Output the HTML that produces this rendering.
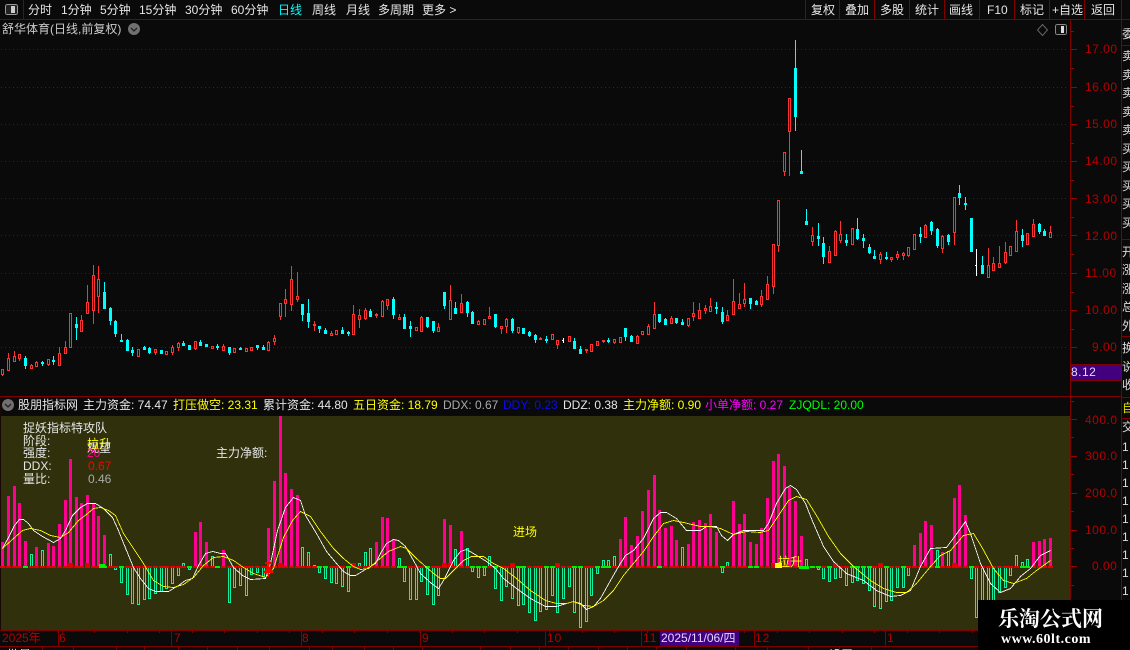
<!DOCTYPE html>
<html><head><meta charset="utf-8"><style>
html,body{margin:0;padding:0;background:#0a0a0a;width:1130px;height:650px;overflow:hidden}
#w{position:absolute;left:0;top:0;width:1130px;height:650px;overflow:hidden;background:#0a0a0a;contain:paint}
#s{position:absolute;left:0;top:0;display:block}
.t{position:absolute;white-space:nowrap;font:12px/14px "Liberation Sans","WenQuanYi Zen Hei","Noto Sans CJK SC",sans-serif;color:#e6e6e6}
.a{color:#b40000;letter-spacing:.5px;left:1085px}
.m{color:#b40000;top:631px}
.c{position:absolute;left:1122px;width:8px;height:650px;top:0;overflow:hidden}
.c .t{left:0;color:#ddd}
.b{position:absolute;left:0;top:647px;width:978px;height:3px;overflow:hidden}
.b .t{top:1px}
</style></head><body><div id="w">
<svg id="s" width="1130" height="650" shape-rendering="crispEdges"></svg>
<div class="t" style="left:28px;top:3px">分时</div>
<div class="t" style="left:61px;top:3px">1分钟</div>
<div class="t" style="left:100px;top:3px">5分钟</div>
<div class="t" style="left:139px;top:3px">15分钟</div>
<div class="t" style="left:185px;top:3px">30分钟</div>
<div class="t" style="left:231px;top:3px">60分钟</div>
<div class="t" style="left:278px;top:3px;color:#0ff">日线</div>
<div class="t" style="left:312px;top:3px">周线</div>
<div class="t" style="left:346px;top:3px">月线</div>
<div class="t" style="left:378px;top:3px">多周期</div>
<div class="t" style="left:422px;top:3px">更多 &gt;</div>
<div class="t" style="left:811px;top:3px">复权</div>
<div class="t" style="left:845px;top:3px">叠加</div>
<div class="t" style="left:880px;top:3px">多股</div>
<div class="t" style="left:915px;top:3px">统计</div>
<div class="t" style="left:949px;top:3px">画线</div>
<div class="t" style="left:987px;top:3px">F10</div>
<div class="t" style="left:1020px;top:3px">标记</div>
<div class="t" style="left:1052px;top:3px">+自选</div>
<div class="t" style="left:1091px;top:3px">返回</div>
<div class="t" style="left:2px;top:22px;color:#ccc">舒华体育(日线,前复权)</div>

<div class="t a" style="top:42px">17.00</div>
<div class="t a" style="top:80px">16.00</div>
<div class="t a" style="top:117px">15.00</div>
<div class="t a" style="top:154px">14.00</div>
<div class="t a" style="top:192px">13.00</div>
<div class="t a" style="top:229px">12.00</div>
<div class="t a" style="top:266px">11.00</div>
<div class="t a" style="top:303px">10.00</div>
<div class="t a" style="top:340px;left:1092px">9.00</div>
<div class="t" style="left:1071px;top:365px;color:#e0d8ff;letter-spacing:.5px">8.12</div>
<div class="t a" style="top:413px;left:1085px">400.0</div>
<div class="t a" style="top:449px">300.0</div>
<div class="t a" style="top:486px">200.0</div>
<div class="t a" style="top:523px">100.0</div>
<div class="t a" style="top:559px;left:1092px">0.00</div>

<div class="t" style="left:18px;top:398px">股朋指标网</div>
<div class="t" style="left:83px;top:398px">主力资金: 74.47</div>
<div class="t" style="left:173px;top:398px;color:#ff0">打压做空: 23.31</div>
<div class="t" style="left:263px;top:398px">累计资金: 44.80</div>
<div class="t" style="left:353px;top:398px;color:#ff0">五日资金: 18.79</div>
<div class="t" style="left:443px;top:398px;color:#aaa">DDX: 0.67</div>
<div class="t" style="left:503px;top:398px;color:#0a0ae6">DDY: 0.23</div>
<div class="t" style="left:563px;top:398px">DDZ: 0.38</div>
<div class="t" style="left:623px;top:398px;color:#ff0">主力净额: 0.90</div>
<div class="t" style="left:705px;top:398px;color:#f0f">小单净额: 0.27</div>
<div class="t" style="left:789px;top:398px;color:#0f0">ZJQDL: 20.00</div>

<div class="t" style="left:23px;top:421px">捉妖指标特攻队</div>
<div class="t" style="left:23px;top:434px">阶段:</div>
<div class="t" style="left:23px;top:446px">强度:</div>
<div class="t" style="left:23px;top:459px">DDX:</div>
<div class="t" style="left:23px;top:472px">量比:</div>
<div class="t" style="left:87px;top:437px;color:#ff0">拉升</div>
<div class="t" style="left:87px;top:441px">观望</div>
<div class="t" style="left:87px;top:446px;color:#ff0090">20</div>
<div class="t" style="left:88px;top:459px;color:#f00">0.67</div>
<div class="t" style="left:88px;top:472px;color:#aaa">0.46</div>
<div class="t" style="left:216px;top:446px">主力净额:</div>
<div class="t" style="left:513px;top:525px;color:#ff0">进场</div>
<div class="t" style="left:778px;top:555px;color:#ff0">拉升</div>

<div class="t m" style="left:2px">2025年</div>
<div class="t m" style="left:59px">6</div>
<div class="t m" style="left:174px">7</div>
<div class="t m" style="left:302px">8</div>
<div class="t m" style="left:422px">9</div>
<div class="t m" style="left:547px;letter-spacing:1px">10</div>
<div class="t m" style="left:643px;letter-spacing:1px">11</div>
<div class="t" style="left:661px;top:631px;color:#e0d8ff">2025/11/06/四</div>
<div class="t m" style="left:755px;letter-spacing:1px">12</div>
<div class="t m" style="left:887px">1</div>
<div class="b"><div class="t" style="left:7px">批量</div><div class="t" style="left:829px">设置</div></div>

<div class="c">
<div class="t" style="top:27px">委</div><div class="t" style="top:49px">卖</div><div class="t" style="top:68px">卖</div><div class="t" style="top:86px">卖</div><div class="t" style="top:105px">卖</div><div class="t" style="top:123px">卖</div><div class="t" style="top:142px">买</div><div class="t" style="top:160px">买</div><div class="t" style="top:179px">买</div><div class="t" style="top:197px">买</div><div class="t" style="top:216px">买</div>
<div class="t" style="top:245px">开</div><div class="t" style="top:263px">涨</div><div class="t" style="top:282px">涨</div><div class="t" style="top:300px">总</div><div class="t" style="top:319px">外</div>
<div class="t" style="top:341px">换</div><div class="t" style="top:360px">说</div><div class="t" style="top:378px">收</div>
<div class="t" style="top:401px;color:#e0e000">自</div><div class="t" style="top:420px">交</div>
<div class="t" style="top:440px">1</div><div class="t" style="top:458px">1</div><div class="t" style="top:476px">1</div><div class="t" style="top:494px">1</div><div class="t" style="top:512px">1</div><div class="t" style="top:530px">1</div><div class="t" style="top:548px">1</div><div class="t" style="top:566px">1</div><div class="t" style="top:584px">1</div>
</div>

<div style="position:absolute;left:978px;top:600px;width:152px;height:50px;background:#000"></div>
<div class="t" style="left:998px;top:606px;font:bold 21px/26px 'Liberation Serif','Noto Serif CJK SC',serif;color:#fff">乐淘公式网</div>
<div class="t" style="left:1001px;top:632px;font:bold 14px/16px 'Liberation Serif',serif;color:#fff;letter-spacing:.5px">www.60lt.com</div>
</div>
<script>
var o='';
function R(x,y,w,h,c){o+='<rect x="'+x+'" y="'+y+'" width="'+w+'" height="'+h+'" fill="'+c+'"/>'}
var DR='#800000',BG='#0a0a0a',RED='#ff3232',CY='#00ffff';
function X(i){return Math.floor(2.7+5.664*i)}
/* panels */
R(1,416,1070,214,'#30300c');
R(0,19,1130,1,DR);R(0,396,1121,1,DR);R(0,630,1121,1,DR);R(0,646,1121,1,DR);R(0,415,1070,1,'#1a0505');
R(23,0,1,19,DR);
[805,839,874,909,944,979,1014,1049,1084,1121].forEach(function(x){R(x,0,1,19,DR)});
R(1070,19,1,631,DR);R(1121,0,1,650,DR);R(0,400,1,230,'#1a0808');
R(1122,45,8,1,DR);R(1122,239,8,1,DR);R(1122,336,8,1,DR);R(1122,397,8,1,DR);R(1122,418,8,1,DR);
/* grid */
[49,87,124,161,198,235,273,310,347].forEach(function(y){
 for(var x=1;x<1067;x+=4)R(x,y,1,1,'#6a1010');
 R(1071,y,6,1,'#a00000');R(1071,y+19,3,1,'#a00000');
});
R(1071,31,3,1,'#a00000');
/* price box */
R(1071,364,50,1,DR);R(1071,380,50,1,DR);R(1071,365,50,15,'#400080');
/* indicator ticks */
[419,456,493,530,566].forEach(function(y){R(1071,y,6,1,'#a00000')});
[401,437,474,511,548,585,604,622].forEach(function(y){R(1071,y,3,1,'#a00000')});
/* candles */
var idx=0;
function seg(b,s){s.split(';').forEach(function(k){
 var p=k.trim().split(' '),c=p[0],h=Math.floor(b+p[1]/3),t=Math.floor(b+p[2]/3),u=Math.floor(b+p[3]/3),l=Math.floor(b+p[4]/3),x=X(idx);
 idx++;
 var col=c=='r'?RED:c=='c'?CY:'#fff';
 if(l>h)R(x,h,1,l-h,col);
 if(c=='w'){R(x-1,t,2,1,col);return}
 if(u-t<1)u=t+1;
 R(x-1,t,3,u-t+1,col);
 if(c=='r'&&u-t>=2)R(x,t+1,1,u-t-1,BG);
})}
seg(255,"r 342 344 359 365;r 294 309 345 347;r 288 304 318 320;r 297 298 309 320;c 304 309 330 342;r 328 331 341 342;r 319 321 333 338;c 318 322 325 333;r 312 313 327 333;c 304 316 320 330;r 277 294 332 333;r 258 277 294 297;r 175 175 278 278;c 186 207 216 255;r 180 196 228 233;r 90 142 176 177;r 30 61 167 207;r 33 73 125 174;c 82 112 160 162;c 157 159 197 210;c 195 198 236 246;c 237 256 259 261;c 252 256 285 288;c 277 285 291 303;r 282 283 305 306;c 273 278 282 286;c 276 279 291 297;r 282 283 293 300;c 285 286 294 297;r 289 289 297 297;r 272 277 291 300;r 263 265 277 288;c 258 264 270 273;c 270 271 282 286;r 258 259 281 285;c 255 261 270 273;c 267 268 273 276;r 274 274 281 282;c 269 273 275 285;r 267 274 285 285;c 276 277 291 300;r 279 280 293 294;c 276 279 282 285;r 279 280 288 291;r 277 277 285 285;c 270 271 276 285;c 270 276 282 285;r 259 261 287 288;r 240 250 258 270;r 144 145 185 197;r 102 133 146 186;r 33 73 149 168;r 52 124 134 141");
seg(270,"c 102 103 132 153;c 87 129 153 174;r 153 162 164 183;c 168 168 174 189;c 175 180 190 192;r 183 189 195 198;r 181 181 193 194;c 171 180 190 192;c 183 186 188 198;r 105 132 194 195;r 117 136 147 174;r 114 120 144 150;c 117 123 138 141;r 129 133 135 144;r 90 93 138 141;r 87 88 105 120;c 81 87 132 147;r 132 141 147 150;c 132 141 174 174;c 153 168 174 201;r 171 172 180 183;r 138 141 183 186;c 141 142 168 174;c 153 154 180 189;r 159 171 183 186;c 66 66 105 117;r 45 91 147 150;c 96 114 129 132;r 72 100 126 126;c 93 96 126 141;c 124 126 159 159;r 150 153 164 165;r 148 148 162 162;r 111 138 144 144;c 132 132 168 174;r 168 168 174 192;r 144 147 168 189;c 144 147 180 189;r 171 171 186 192;c 174 175 189 189;c 183 188 195 201;c 192 195 207 219;r 202 204 209 210;c 198 207 210 219;r 192 193 207 210;r 210 210 222 237;w 204 210 212 219;r 198 198 214 216;c 205 213 234 237;c 228 237 249 249;r 237 237 238 249;r 222 222 243 243;r 213 214 225 225;r 210 210 215 219;c 205 210 215 219;r 207 207 216 222;r 202 202 216 216;c 174 175 198 213;c 195 198 213 216;r 197 198 219 219;r 183 184 192 195;r 162 168 192 192;r 96 132 174 177;c 132 132 153 159;c 144 147 162 162;r 138 144 159 162;c 144 144 156 162;c 147 156 162 165;r 144 144 165 171;r 96 129 138 153;r 99 120 144 144");
seg(180,"r 375 384 392 402;r 354 379 395 395;c 366 382 386 402;c 381 396 423 432;r 390 406 422 422;r 297 364 404 404;r 339 373 386 387;r 309 358 369 381;c 354 354 369 387;c 360 363 372 375;r 330 349 373 381;r 288 313 357 360;r 192 193 320 342;r 60 61 197 216");
seg(30,"r 367 367 425 438;r 205 205 305 438;c 30 114 258 303;c 360 423 429 429");
seg(180,"c 87 123 132 132;r 141 165 183 198;c 129 168 174 198;c 171 189 228 252;r 198 213 246 249;r 150 153 225 225;r 123 162 180 189;c 162 180 186 198;r 144 145 192 195;c 114 147 174 180;c 162 174 180 204;c 192 201 216 222;c 210 228 234 237;r 216 222 237 252;c 216 231 234 240;r 231 232 237 246;r 213 222 231 240;r 216 219 225 240;r 201 201 225 231;r 162 163 207 210;c 141 162 168 189;r 132 135 171 171;c 123 126 150 165;c 144 147 195 204;r 165 168 204 219;c 162 165 183 195;r 51 52 158 195;c 15 39 51 75;c 51 70 72 90;c 114 114 213 213;w 207 255 258 288;c 228 255 279 279;r 204 255 291 294;r 231 249 270 270;r 198 249 261 261;r 186 216 246 252;r 198 200 225 225;r 120 153 213 213;c 147 165 180 201;r 159 159 192 192;r 117 132 168 168;c 129 132 153 162;c 147 153 165 165;r 138 156 171 171");
/* histogram */
var H=[542,496,486,503,541,-554,547,-550,543,546,524,500,459,497,503,495,503,516,535,-554,569,582,594,603,604,599,598,593,591,588,583,575,-563,569,532,522,542,-556,567,550,602,587,585,595,574,572,576,528,481,416,473,489,495,
-547,-552,-565,572,578,582,583,586,591,567,-563,-552,-548,542,517,518,539,-558,581,599,599,581,594,604,595,519,525,-549,531,-548,571,577,575,-556,588,600,586,598,605,604,612,620,611,609,595,612,598,586,612,627,621,595,573,-560,-560,-556,539,517,545,536,511,490,475,510,528,526,540,-547,544,522,520,
523,514,532,572,-562,501,524,514,542,544,528,498,461,454,466,487,501,536,-559,566,569,578,581,578,577,585,582,580,583,590,606,608,601,600,587,587,575,545,533,521,525,-550,552,-551,498,485,515,578,617,605,607,600,592,587,575,-555,-562,-559,542,541,539,538];
H.forEach(function(v,i){var x=X(i),g=v<0,y=Math.abs(v);
 if(!g&&y<566){R(x-1,y,3,566-y,'#ff0090')}
 else{var t=Math.min(y,566),b=Math.max(y,566);if(b-t>0){R(x-1,t,3,b-t+1,'#10f0a0');if(b-t>=2)R(x,t+1,1,b-t-1,'#30300c')}}
});
var G=[4,18,21,33,38,56,57,61,70,71,75,83,84,85,87,91,92,96,97,101,102,105,106,107,116,127,132,133,142,143,144,146,150,151,152,153,156,159,165,171,180,181];
var RR=[12,15,49,62,78,79,90,98,136,137,147,155,168];
for(var i=0;i<186;i++){var x=X(i);
 if(G.indexOf(i)>=0)R(x-2,566,5,2,'#00f000');
 else R(x-2,566,5,2,'#e00000');
 if(RR.indexOf(i)>=0)R(x-2,563,5,5,'#e00000');
}
R(775,563,7,5,'#ffff00');R(799,566,10,3,'#00f000');R(99,564,6,4,'#00f000');
/* lines */
function L(pts,c){
 var s=pts.trim().split(/\s+/).map(function(p){var q=p.split(',');return (Math.floor(+q[0])+.5)+','+(Math.floor(+q[1])+.5)}).join(' ');
 o+='<polyline points="'+s+'" fill="none" stroke="'+c+'" stroke-width=".85"/>'}
function Z(bx,by,a){var r=[];for(var i=0;i<a.length;i+=2)r.push((bx+a[i]/3).toFixed(1)+','+(by+a[i+1]/3).toFixed(1));return r.join(' ')}
var wA="2,548 8,537 14,525 19,519 23,519 28,523 33,530 42,536 53,542 60,538 65,530 72,515 80,507 87,503 95,503 103,508 112,517 118,530 126,550 133,567 140,578 148,588 155,591 168,591 178,585 185,580 192,578 198,565 205,553 212,551 220,553 225,553 233,567 242,575 250,579 265,578 270,563 277,530 285,507 293,497 300,500 ";
var wB=Z(300,510,[15,15,50,70,80,125,110,160,130,185,150,197,165,195,195,178,225,160,240,130,260,100,280,88,295,92,315,110,340,150,360,190,395,220,415,235,430,210,460,150,480,125,500,117,520,130,560,155,585,175,610,205,650,235,690,265,735,290,770,290,800,280,820,275,840,280,860,297,880,290,900,265,930,210,955,170,975,135,1000,120,1030,85,1060,25,1080,8,1100,8,1130,25,1160,62,1200,62]);
var wC=Z(700,440,[20,258,50,258,65,285,82,302,100,282,130,270,160,270,190,270,205,250,230,190,255,145,270,137,290,148,315,190,340,250,370,320,400,365,440,400,490,420,530,450,570,470,600,465,630,450,660,380,690,325,740,322,765,285,795,245,815,290,840,370,870,430,900,456,930,445,960,410,990,385,1020,345,1050,330]);
L(wA+wB+' '+wC,'#fff');
var yA="2,548 13,538 22,530 30,528 40,530 50,535 60,537 68,532 78,520 86,514 93,508 100,507 108,510 115,515 123,533 133,548 143,563 153,580 163,586 173,587 183,584 193,577 203,565 213,557 223,556 233,560 243,567 253,573 265,577 273,568 283,537 292,520 300,511 ";
var yB=Z(300,510,[30,20,60,65,100,115,130,145,160,170,180,178,205,175,230,155,265,125,300,108,320,115,350,145,375,170,400,190,420,205,435,205,465,175,490,150,515,138,550,140,580,160,610,175,650,205,690,240,735,272,770,280,800,280,820,275,850,285,880,290,910,270,940,240,970,195,1000,160,1030,125,1060,80,1090,40,1120,30,1150,38,1200,50]);
var yC=Z(700,440,[30,258,60,265,100,283,140,275,180,277,205,270,235,225,265,180,290,170,320,178,350,225,385,290,420,340,460,378,510,420,550,445,590,458,620,457,650,430,690,380,720,345,750,330,790,285,820,280,845,320,880,385,910,420,940,430,980,415,1010,390,1050,360]);
L(yA+yB+' '+yC,'#ffff00');
/* arrow */
R(265,562,7,2,'#f00');R(268,564,1,13,'#f00');
o+='<polygon points="268.5,565 274,573 263,573" fill="#f00"/>';
/* time axis */
[58,171,301,420,545,641,754,885].forEach(function(x){R(x,631,1,15,DR)});
R(660,631,79,15,'#400080');
for(var x=29;x<1070;x+=32.5)R(Math.round(x),631,1,2,DR);
[42,73,116,144,178,207,237,269,309,332,364,393,422,480,510,539,568,598,627,656,686,735,767,808,839,871].forEach(function(x){R(x,647,1,3,DR)});
/* toggle icons */
o+='<rect x="5.5" y="4.5" width="12" height="10" rx="2" fill="#222" stroke="#999"/>';R(11,6,4,7,'#ccc');
o+='<rect x="1055.5" y="24.5" width="11" height="10" rx="2" fill="#111" stroke="#888"/>';R(1061,26,3,7,'#ddd');
o+='<polygon points="1042.5,24.5 1047.5,30 1042.5,35.5 1037.5,30" fill="none" stroke="#666" shape-rendering="auto"/>';
function C(x,y){o+='<circle cx="'+x+'" cy="'+y+'" r="6" fill="#707070" shape-rendering="auto"/><polyline points="'+(x-3)+','+(y-1)+' '+x+','+(y+2)+' '+(x+3)+','+(y-1)+'" fill="none" stroke="#222" stroke-width="1.3" shape-rendering="auto"/>'}
C(134,29);C(8,405);
document.getElementById('s').innerHTML=o;
</script>
</body></html>
